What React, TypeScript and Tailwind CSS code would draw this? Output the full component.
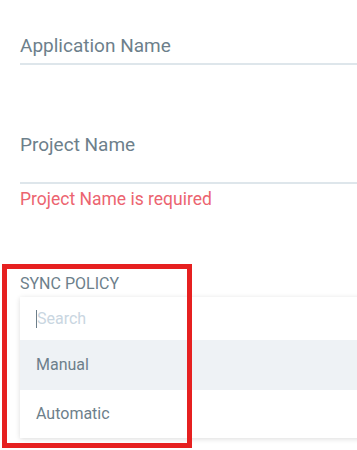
import { useState } from "react";

const options = ["Manual", "Automatic"];

export default function App() {
  const [hovered, setHovered] = useState<string>("Manual");

  return (
    <div
      className="relative w-[357px] h-[450px] overflow-hidden bg-white pl-5"
      style={{ fontFamily: "Roboto, 'Noto Sans', sans-serif" }}
    >
      {/* application name */}
      <div className="pt-[34px]">
        <div className="h-[31px] border-b-2 border-[#dee6eb] text-[19px] leading-[24px] text-[#6d7f8b]">
          Application Name
        </div>
      </div>

      {/* project name */}
      <div className="mt-[68px] h-[51px] border-b-2 border-[#dee6eb] text-[19px] leading-[24px] text-[#6d7f8b]">
        Project Name
      </div>
      <div className="mt-[3px] text-[17.5px] leading-[24px] text-[#ec6470]">
        Project Name is required
      </div>

      {/* sync policy */}
      <div className="mt-[63px] text-[16px] leading-[20px] uppercase text-[#6d7f8b]">
        Sync Policy
      </div>
      <div className="mt-[3px] -mr-6 bg-white shadow-[0_1px_5px_rgba(0,0,0,0.14)]">
        <div className="h-[43px] flex items-center pl-4 text-[16px]">
          <span className="w-px h-[18px] bg-[#6d7f8b]" />
          <span className="text-[#c9d6e1]">Search</span>
        </div>
        {options.map((opt, i) => (
          <div
            key={opt}
            onMouseEnter={() => setHovered(opt)}
            className={`flex items-center pl-4 text-[16px] text-[#6d7f8b] ${
              i === 0 ? "h-[50px]" : "h-[48px]"
            } ${hovered === opt ? "bg-[#eef2f5]" : "bg-white"}`}
          >
            {opt}
          </div>
        ))}
      </div>

      {/* highlight annotation */}
      <div className="absolute left-[2px] top-[264px] w-[190px] h-[184px] border-[5px] border-[#e62020] pointer-events-none" />
    </div>
  );
}
